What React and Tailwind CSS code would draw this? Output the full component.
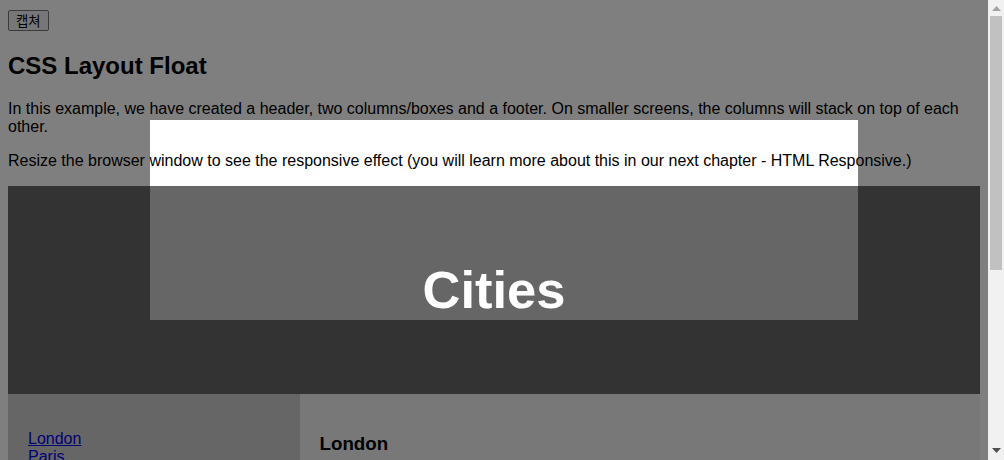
import React from 'react';

const cities = ['London', 'Paris', 'Tokyo'];

function Scrollbar() {
  return (
    <div className="fixed top-0 right-0 h-screen w-[16px] bg-[#f1f1f1] flex flex-col items-center">
      <svg width="9" height="5" viewBox="0 0 9 5" className="mt-[6px]">
        <path d="M0 5 L4.5 0 L9 5 Z" fill="#a3a3a3" />
      </svg>
      <div className="mt-[5px] w-[12px] h-[254px] bg-[#c1c1c1]" />
      <div className="flex-1" />
      <svg width="9" height="5" viewBox="0 0 9 5" className="mb-[7px]">
        <path d="M0 0 L9 0 L4.5 5 Z" fill="#505050" />
      </svg>
    </div>
  );
}

export default function App() {
  return (
    <div className="mr-[16px] p-2 bg-white text-black leading-[normal] font-['Liberation_Sans',Arial,sans-serif] text-base">
      <div className="h-6">
        <button className="mt-[2px] h-[21px] px-[7px] text-[13.33px] leading-[normal] bg-[#efefef] border border-[#767676] rounded-[2px] font-['Noto_Sans_CJK_KR',sans-serif]">
          캡쳐
        </button>
      </div>
      <h2 className="text-2xl leading-[normal] font-bold my-[19.92px]">CSS Layout Float</h2>
      <p className="my-4">
        In this example, we have created a header, two columns/boxes and a footer. On smaller screens, the columns will stack on top of each other.
      </p>
      <p className="my-4">
        Resize the browser window to see the responsive effect (you will learn more about this in our next chapter - HTML Responsive.)
      </p>

      <header className="bg-[#666] p-[30px] text-center text-white">
        <h2 className="text-[52.5px] leading-[normal] font-bold my-[43.57px]">Cities</h2>
      </header>

      <section className="flex">
        <nav className="w-[30%] h-[300px] p-5 bg-[#ccc]">
          <ul className="my-4">
            {cities.map((c) => (
              <li key={c}>
                <a href="#" className="text-[#0000ee] underline">{c}</a>
              </li>
            ))}
          </ul>
        </nav>
        <article className="w-[70%] h-[300px] p-5 bg-[#f1f1f1]">
          <h1 className="text-[18.72px] leading-[normal] font-bold my-[18.72px]">London</h1>
          <p className="my-4">London is the capital city of England. It is the most populous city in the United Kingdom, with a metropolitan area of over 13 million inhabitants.</p>
          <p className="my-4">Standing on the River Thames, London has been a major settlement for two millennia, its history going back to its founding by the Romans, who named it Londinium.</p>
        </article>
      </section>

      <footer className="bg-[#777] p-[10px] text-center text-white">
        <p className="my-4">Footer</p>
      </footer>

      <div className="fixed top-0 bottom-0 left-0 right-[16px] pointer-events-none overflow-hidden">
        <div className="absolute left-[150px] top-[120px] w-[708px] h-[200px] shadow-[0_0_0_3000px_rgba(0,0,0,0.5)]" />
      </div>

      <Scrollbar />
    </div>
  );
}
